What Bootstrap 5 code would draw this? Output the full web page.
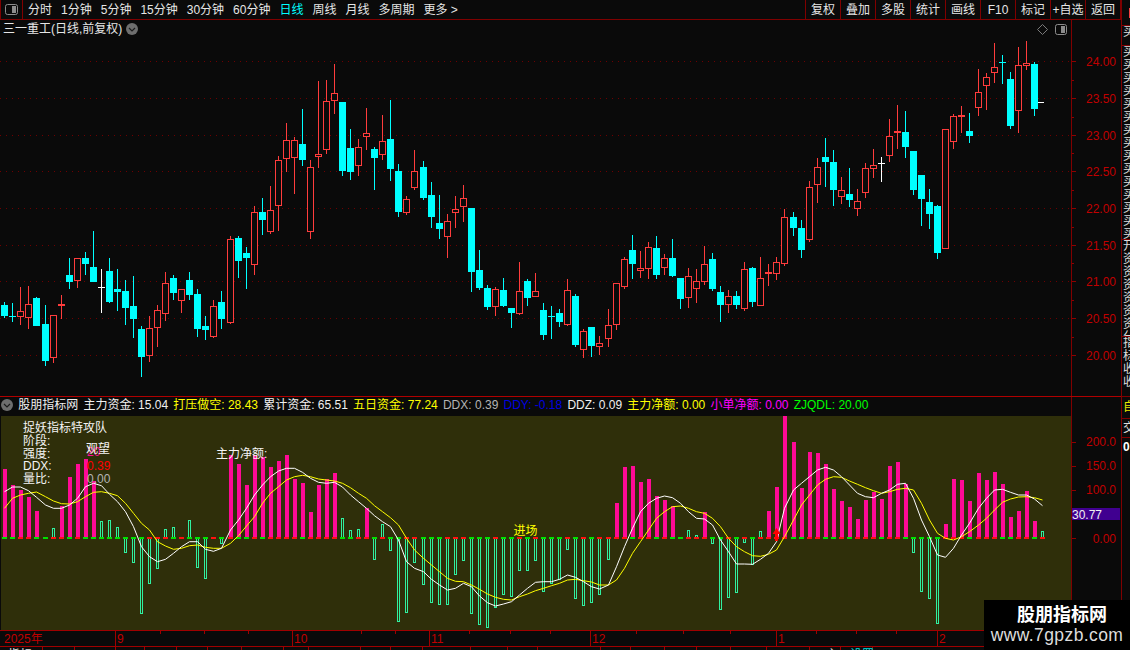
<!doctype html>
<html lang="zh">
<head>
<meta charset="utf-8">
<title>三一重工</title>
<link href="https://cdn.jsdelivr.net/npm/bootstrap@5.3.0/dist/css/bootstrap.min.css" rel="stylesheet">
<style>
html,body{margin:0;height:100%;background:#0a0a0a;overflow:hidden}
body,svg text{font-family:"Liberation Sans","Noto Sans CJK SC",sans-serif;font-size:12px;line-height:1}
.frame{width:1130px;height:650px;position:relative;background:#0a0a0a;color:#e6e6e6}
.work{width:1121px}
.rail{width:9px;border-left:1px solid #800000;overflow:hidden}
.railcell{border-bottom:1px solid #800000;overflow:hidden;padding-left:1px;color:#ddd;line-height:13px;flex:none}
.railcell span{display:block;width:13px}
.rc1{height:26px}.rc2{height:20px}.rc3{height:194px}.rc4{height:97px}.rc5{height:60px}.rc6{height:22px;color:#e8e800;padding-top:4px}.rc7{height:19px;padding-top:3px}.rc8{border:0;font-weight:700;padding-top:3px;color:#fff}
.redchip{display:block;width:6px!important;height:10px;background:#f04040;margin:8px 0 0 6px}
.topbar{height:20px;border-bottom:1px solid #800000;flex:none}
.leftbtn{width:23px;border-right:1px solid #800000;border-left:1px solid #800000}
.periods{gap:9px;padding-left:5px}
.active-tab{color:#00ffff}
.toolcell{width:35px;border-left:1px solid #800000;text-align:center;white-space:nowrap}
.toolcell:last-child{border-right:1px solid #800000;width:36px}
.upper{height:377px;border-bottom:1px solid #b00000;flex:none}
.chartpane{width:1071px;position:relative;flex:none}
.chartpane svg,.axispane svg{display:block}
.stock-title{position:absolute;left:3px;top:3px;white-space:nowrap}
.stock-tools{position:absolute;right:4px;top:4px;gap:7px}
.axispane{width:50px;border-left:1px solid #800000;flex:none}
.lower{height:253px}
.legendbar{height:19px;gap:5.2px;padding:0 0 4px 1px;white-space:nowrap;flex:none}
.olive{background:#2f2f0a;margin-left:1px;flex:none;display:block}
.yel{color:#ffff00}.wht{color:#f0f0f0}.gry{color:#b4b4b4}.blu{color:#0000e0}.mag{color:#ff00ff}.grn{color:#00ff00}
.watermark{position:absolute;right:0;bottom:0;width:146px;height:50px;background:#000}
.wm1{font-size:18px;font-weight:700;color:#fff;line-height:20px;padding-left:10px}
.wm2{font-size:17.5px;color:#ddd;line-height:20px;letter-spacing:.4px}
svg text.axl{fill:#c00000}
</style>
</head>
<body>
<div class="frame d-flex">
  <div class="work d-flex flex-column">
    <div class="topbar d-flex align-items-stretch">
      <div class="leftbtn d-flex align-items-center justify-content-center">
        <svg width="13" height="11" viewBox="0 0 13 11"><rect x=".5" y=".5" width="12" height="10" rx="2" fill="none" stroke="#8c8c8c"/><rect x="7" y="2" width="4" height="7" fill="#8c8c8c"/></svg>
      </div>
      <div class="periods d-flex align-items-center">
        <span>分时</span><span>1分钟</span><span>5分钟</span><span>15分钟</span><span>30分钟</span><span>60分钟</span><span class="active-tab">日线</span><span>周线</span><span>月线</span><span>多周期</span><span>更多 &gt;</span>
      </div>
      <div class="ms-auto d-flex align-items-stretch">
        <div class="toolcell d-flex align-items-center justify-content-center">复权</div>
        <div class="toolcell d-flex align-items-center justify-content-center">叠加</div>
        <div class="toolcell d-flex align-items-center justify-content-center">多股</div>
        <div class="toolcell d-flex align-items-center justify-content-center">统计</div>
        <div class="toolcell d-flex align-items-center justify-content-center">画线</div>
        <div class="toolcell d-flex align-items-center justify-content-center">F10</div>
        <div class="toolcell d-flex align-items-center justify-content-center">标记</div>
        <div class="toolcell d-flex align-items-center justify-content-center">+自选</div>
        <div class="toolcell d-flex align-items-center justify-content-center">返回</div>
      </div>
    </div>

    <div class="upper d-flex">
      <div class="chartpane">
        <svg id="kline" width="1071" height="376" viewBox="0 20 1071 376" shape-rendering="crispEdges"></svg>
        <div class="stock-title d-flex align-items-center gap-1">三一重工(日线,前复权)
          <svg width="12" height="12" viewBox="0 0 12 12"><circle cx="6" cy="6" r="6" fill="#6e6e6e"/><path d="M3 5l3 3 3-3" fill="none" stroke="#1c1c1c" stroke-width="1.2"/></svg>
        </div>
        <div class="stock-tools d-flex align-items-center">
          <svg width="11" height="11" viewBox="0 0 11 11"><path d="M5.5 .5l5 5-5 5-5-5z" fill="none" stroke="#7a7a7a"/></svg>
          <svg width="12" height="11" viewBox="0 0 12 11"><rect x=".5" y=".5" width="11" height="10" rx="2" fill="none" stroke="#8c8c8c"/><rect x="6" y="2" width="4" height="7" fill="#8c8c8c"/></svg>
        </div>
      </div>
      <div class="axispane">
        <svg id="upaxis" width="49" height="376" viewBox="1072 20 49 376">
          <text class="axl" x="1116" y="65.5" text-anchor="end">24.00</text>
          <text class="axl" x="1116" y="102.5" text-anchor="end">23.50</text>
          <text class="axl" x="1116" y="139.5" text-anchor="end">23.00</text>
          <text class="axl" x="1116" y="176" text-anchor="end">22.50</text>
          <text class="axl" x="1116" y="212.5" text-anchor="end">22.00</text>
          <text class="axl" x="1116" y="249.5" text-anchor="end">21.50</text>
          <text class="axl" x="1116" y="286" text-anchor="end">21.00</text>
          <text class="axl" x="1116" y="322.5" text-anchor="end">20.50</text>
          <text class="axl" x="1116" y="359.5" text-anchor="end">20.00</text>
        </svg>
      </div>
    </div>

    <div class="lower d-flex">
      <div class="chartpane d-flex flex-column">
        <div class="legendbar d-flex align-items-center">
          <svg width="12" height="12" viewBox="0 0 12 12"><circle cx="6" cy="6" r="6" fill="#6e6e6e"/><path d="M3 5l3 3 3-3" fill="none" stroke="#1c1c1c" stroke-width="1.2"/></svg>
          <span class="wht">股朋指标网</span>
          <span class="wht">主力资金: 15.04</span>
          <span class="yel">打压做空: 28.43</span>
          <span class="wht">累计资金: 65.51</span>
          <span class="yel">五日资金: 77.24</span>
          <span class="gry">DDX: 0.39</span>
          <span class="blu">DDY: -0.18</span>
          <span class="wht">DDZ: 0.09</span>
          <span class="yel">主力净额: 0.00</span>
          <span class="mag">小单净额: 0.00</span>
          <span class="grn">ZJQDL: 20.00</span>
        </div>
        <svg id="indic" class="olive" width="1070" height="214" viewBox="1 416 1070 214"></svg>
        <svg id="timeax" width="1071" height="20" viewBox="0 630 1071 20" shape-rendering="crispEdges">
          <text class="axl" x="4" y="643">2025年</text>
          <text class="axl" x="117" y="643">9</text>
          <text class="axl" x="294" y="643">10</text>
          <text class="axl" x="431" y="643">11</text>
          <text class="axl" x="592" y="643">12</text>
          <text class="axl" x="778" y="643">1</text>
          <text class="axl" x="939" y="643">2</text>
        </svg>
      </div>
      <div class="axispane">
        <svg id="lowaxis" width="49" height="253" viewBox="1072 397 49 253">
          <text class="axl" x="1116" y="446" text-anchor="end">200.0</text>
          <text class="axl" x="1116" y="470" text-anchor="end">150.0</text>
          <text class="axl" x="1116" y="494" text-anchor="end">100.0</text>
          <rect x="1072" y="508" width="48" height="12" fill="#400090"/>
          <text x="1072" y="518.5" fill="#f0f0f0">30.77</text>
          <text class="axl" x="1116" y="542.5" text-anchor="end">0.00</text>
        </svg>
      </div>
    </div>
  </div>

  <div class="rail d-flex flex-column">
    <div class="railcell rc1"><span class="redchip"></span></div>
    <div class="railcell rc2"><span>买</span></div>
    <div class="railcell rc3"><span>买</span><span>买</span><span>买</span><span>买</span><span>买</span><span>买</span><span>买</span><span>买</span><span>买</span><span>买</span><span>买</span><span>买</span><span>买</span><span>买</span><span>买</span></div>
    <div class="railcell rc4"><span>开</span><span>资</span><span>资</span><span>资</span><span>资</span><span>资</span><span>资</span><span>分</span></div>
    <div class="railcell rc5"><span>指</span><span>标</span><span>收</span><span>收</span></div>
    <div class="railcell rc6"><span>自</span></div>
    <div class="railcell rc7"><span>交</span></div>
    <div class="railcell rc8"><span>0</span></div>
  </div>

  <div class="watermark d-flex flex-column align-items-center justify-content-center">
    <div class="wm1">股朋指标网</div>
    <div class="wm2">www.7gpzb.com</div>
  </div>
</div>

<script src="https://cdn.jsdelivr.net/npm/bootstrap@5.3.0/dist/js/bootstrap.bundle.min.js"></script>
<script>
const K=`c 906 915 948 954|c 909 949 949 966|r 861 934 950 975|r 858 913 953 987|c 891 894 978 978|c 915 972 1083 1098|r 945 946 1073 1089|R 885 913 917 957|c 774 825 846 867|r 774 775 842 864|c 756 774 792 825|c 693 801 846 846|w 807 862 862 939|c 774 813 906 909|c 807 867 876 933|c 840 873 924 975|c 828 918 957 1014|c 978 987 1071 1131|r 948 985 1067 1086|r 915 931 983 1041|r 816 850 941 963|c 825 834 879 900|r 867 868 902 939|c 816 840 885 900|c 867 882 987 1011|c 948 978 990 1020|r 900 919 1010 1014|c 873 906 957 987|r 708 718 968 972|c 708 714 783 834|c 741 759 774 867|r 618 637 794 825|c 594 636 660 705|r 558 631 695 702|r 468 481 617 693|r 369 421 478 516|r 411 421 473 582|c 327 432 480 498|r 480 502 695 717|r 243 463 472 503|r 240 304 449 462|r 192 280 302 342|c 306 306 513 528|c 387 444 516 540|r 417 442 497 528|r 324 400 410 450|c 441 447 474 570|r 345 424 464 480|c 300 417 507 543|c 492 513 636 651|r 588 597 638 645|r 450 514 564 570|c 483 501 594 600|c 546 585 651 684|c 585 669 687 717|r 642 664 710 774|r 588 627 639 684|r 555 594 620 666|c 624 624 816 876|c 750 810 864 870|c 855 864 921 930|r 861 867 920 948|c 834 870 918 921|c 924 924 939 984|r 786 874 941 945|c 837 843 894 918|r 819 874 890 891|c 909 930 1005 1020|c 918 949 949 1017|c 927 939 966 981|r 837 870 976 978|c 882 888 1035 1041|r 987 993 1051 1074|c 981 981 1038 1071|r 1008 1030 1040 1065|r 927 976 1016 1041|r 849 850 974 990|r 771 778 861 867|c 705 750 792 837|r 753 804 812 834|r 726 742 808 837|c 708 744 825 837|r 762 775 803 825|c 717 774 828 831|c 834 834 897 927|r 804 829 893 924|r 807 844 868 909|r 738 793 847 855|c 759 777 867 873|c 858 876 915 966|r 870 889 915 939|c 873 888 915 927|r 786 808 927 933|c 801 804 906 921|r 771 835 917 918|R 792 817 820 858|r 771 787 821 840|r 627 652 791 798|c 636 651 684 708|c 660 684 750 774|r 544 562 719 725|r 474 502 554 608|c 414 471 486 561|c 450 486 570 617|r 531 571 592 611|c 504 582 600 620|r 567 603 628 647|r 489 505 580 594|r 447 496 508 534|w 471 490 490 546|r 357 409 469 486|R 315 394 398 447|c 333 396 441 474|c 453 453 570 585|c 525 525 597 677|c 567 607 642 687|c 615 618 759 777|r 387 388 746 746|r 342 349 425 447|R 318 346 350 399|c 339 393 408 429|r 207 277 323 348|r 219 232 257 330|r 129 202 220 249|c 165 186 190 252|c 216 237 378 387|r 141 196 334 399|r 123 190 196 210|c 186 192 327 348`.split('|').map(s=>s.split(' '));
const H=`m-153 m-105 m-90 m-69 m-27 z0 h25 m-41 m-129 m-168 m-183 m-117 h3 h0 h22 h95 h125 h278 h188 h143 h27 h22 z0 h0 h140 h173 z0 h68 m-195 m-168 m-105 m-195 m-189 m-159 m-177 m-195 m-123 m-111 m-24 m-105 m-123 m-141 h-6 h30 h27 m-36 h116 h12 h90 h302 h275 h125 h191 h245 h251 h251 h161 h119 h278 h311 h320 h260 h221 h227 h149 h149 h119 h212 h188 h176 h86 h233 h254 h245 h221 h116 m-51 m-159 m-162 m-114 m-123 m-72 m-60 m-42 z0 h30 h45 m-24 h68 h266 h230 h215 h65 h133 h33 m-27 m-99 m-312 m-234 m-96 m-204 m-201 m-168 m-93 m-57 m-39 m-3 m-60 m-84 m-63 m-162 m-174 m-108 h95 h212 h233 h308 m12 m-123 m-120 m-57 m-141 m-120 m-144 m-108 m-9 m-27 m-87 m3 h33`.split(' ');
const W=[-85,-99,-99,-88,-68,-45,-35,-35,-45,-65,-100,-110,-103,-77,-55,-25,20,80,110,125,118,100,80,65,65,88,94,85,30,0,-35,-75,-105,-130,-147,-155,-155,-143,-125,-113,-110,-113,-99,-75,-55,-35,-13,5,20,60,125,145,155,178,195,210,205,190,200,228,248,258,252,245,225,205,187,185,185,178,165,172,185,200,207,195,140,80,25,-25,-50,-65,-72,-67,-50,-25,-5,-3,15,60,95,132,132,133,118,100,65,-35,-90,-110,-130,-150,-158,-150,-130,-105,-80,-70,-67,-80,-90,-107,-110,-65,0,50,105,112,85,45,10,-35,-65,-90,-92,-83,-75,-75,-63,-43];
const Y=[-35,-65,-75,-80,-84,-70,-57,-49,-48,-55,-70,-83,-85,-80,-73,-50,-20,10,30,65,78,88,85,77,75,82,85,85,70,47,18,-10,-50,-80,-100,-120,-130,-134,-130,-123,-120,-117,-110,-97,-80,-65,-43,-25,-7,15,55,90,115,135,155,175,184,185,195,208,222,232,238,240,230,222,212,205,197,190,180,178,182,186,195,195,180,145,100,65,30,-5,-25,-40,-42,-35,-25,-20,-5,20,55,80,95,107,109,103,90,50,0,-45,-75,-105,-122,-130,-128,-117,-107,-97,-88,-80,-85,-92,-95,-90,-50,0,40,55,60,50,35,15,-5,-30,-53,-63,-69,-70,-67,-60];
const CX=i=>Math.round(4.3+8.043*i)+.5;
const RED='#ff3c3c',CY='#00ffff';
const vline=(x,a,b,c)=>`<line x1="${x}" x2="${x}" y1="${a}" y2="${b}" stroke="${c}"/>`;
const hline=(a,b,y,c,extra='')=>`<line x1="${a}" x2="${b}" y1="${y}" y2="${y}" stroke="${c}" ${extra}/>`;

/* price panel */
let s='';
const grid=[61,98,135,171,208,245,281,318,355];
grid.forEach(y=>s+=hline(0,1071,y+.5,'#6e0000','stroke-dasharray="1 5"'));
K.forEach((k,i)=>{
  const x=CX(i),t=k[0],[hi,top,bot,lo]=k.slice(1).map(v=>Math.round(+v/3));
  const col=t==='c'?CY:t==='w'?'#ffffff':RED;
  s+=vline(x,hi,lo,col);
  if(t==='c'){
    s+=bot-top<2?hline(x-3.5,x+3.5,top+.5,col):`<rect x="${x-3.5}" y="${top}" width="7" height="${bot-top}" fill="${col}"/>`;
  }else if(t==='w'){
    s+=hline(x-3.5,x+3.5,top+.5,col);
  }else if(t==='R'){
    s+=`<rect x="${x-3.5}" y="${top}" width="7" height="2" fill="${col}"/>`;
  }else{
    s+=`<rect x="${x-3}" y="${top+.5}" width="6" height="${Math.max(bot-top-1,2)}" fill="#0a0a0a" stroke="${col}"/>`;
  }
});
s+=hline(1038,1044,102.5,'#ffffff');
document.getElementById('kline').innerHTML=s;

/* price axis ticks */
let a=document.getElementById('upaxis').innerHTML;
grid.forEach((y,n)=>{
  a+=hline(1072,1076,y+.5,'#900000');
  if(n<grid.length-1)a+=hline(1072,1074,Math.round((y+grid[n+1])/2)+.5,'#900000');
});
document.getElementById('upaxis').innerHTML=a;

/* indicator panel */
const yv=v=>520+v/3;
let d='';
H.forEach((h,i)=>{
  const x=CX(i),t=h[0],v=+h.slice(1),y=Math.round(yv(v));
  if(t==='m')d+=`<rect x="${x-2}" y="${y}" width="4" height="${538-y}" fill="#ff0a96" shape-rendering="crispEdges"/>`;
  if(t==='h'){const a=Math.min(y,538),b=Math.max(y,538);d+=`<rect x="${x-1}" y="${a+.5}" width="2" height="${b-a}" fill="none" stroke="#30f0a0" shape-rendering="crispEdges"/>`;}
  const up=i>=K.length||/[rR]/.test(K[i][0]);
  d+=`<rect x="${x-2.5}" y="537" width="5" height="2" fill="${up?'#ff1010':'#00e000'}" shape-rendering="crispEdges"/>`;
});
const pts=A=>A.map((v,i)=>CX(i)+','+yv(v).toFixed(1)).join(' ');
d+=`<polyline points="${pts(Y)}" fill="none" stroke="#ffff00"/>`;
d+=`<polyline points="${pts(W)}" fill="none" stroke="#ffffff"/>`;
d+=`<path d="M776.5 528l-4 6h2.5v7h3v-7h2.5z" fill="#ff0000"/>`;
const T=(x,y,txt,c)=>`<text x="${x}" y="${y}" fill="${c}">${txt}</text>`;
d+=T(23,432,'捉妖指标特攻队','#f4f4f4')+T(23,445,'阶段:','#f4f4f4')+T(23,458,'强度:','#f4f4f4')+T(23,470,'DDX:','#f4f4f4')+T(23,483,'量比:','#f4f4f4');
d+=T(87,456,'20','#ff0a96')+T(86,453,'观望','#f4f4f4')+T(87,470,'0.39','#ff0000')+T(87,483,'0.00','#b4b4b4');
d+=T(216,458,'主力净额:','#f4f4f4')+T(513.5,535,'进场','#ffff00');
document.getElementById('indic').innerHTML=d;

/* date axis */
let t=document.getElementById('timeax').innerHTML;
t+=hline(0,1071,630.5,'#a00000')+hline(0,1071,646.5,'#a00000');
[115,292,429,590,776,937].forEach(x=>t+=vline(x+.5,631,646,'#a00000'));
[160,204,248,361,395,469,510,550,636,683,730,816,856,896,985,1029].forEach(x=>t+=vline(x+.5,631,634,'#a00000'));
[42,74,115,144,176,207,241,283,308,360,390,422,470,507,537,600,630,664,696,730,766,809,840,872].forEach(x=>t+=vline(x+.5,647,650,'#a00000'));
t+=`<text x="8" y="659" fill="#e6e6e6">指标</text><text x="826" y="659" fill="#e6e6e6">主</text><text x="850" y="659" fill="#00e0e0">设置</text>`;
document.getElementById('timeax').innerHTML=t;

/* lower axis ticks */
let l=document.getElementById('lowaxis').innerHTML;
[442,466,490,538].forEach(y=>l+=hline(1072,1076,y+.5,'#900000'));
l+=hline(1072,1121,630.5,'#a00000');
document.getElementById('lowaxis').innerHTML=l;
</script>
</body>
</html>
